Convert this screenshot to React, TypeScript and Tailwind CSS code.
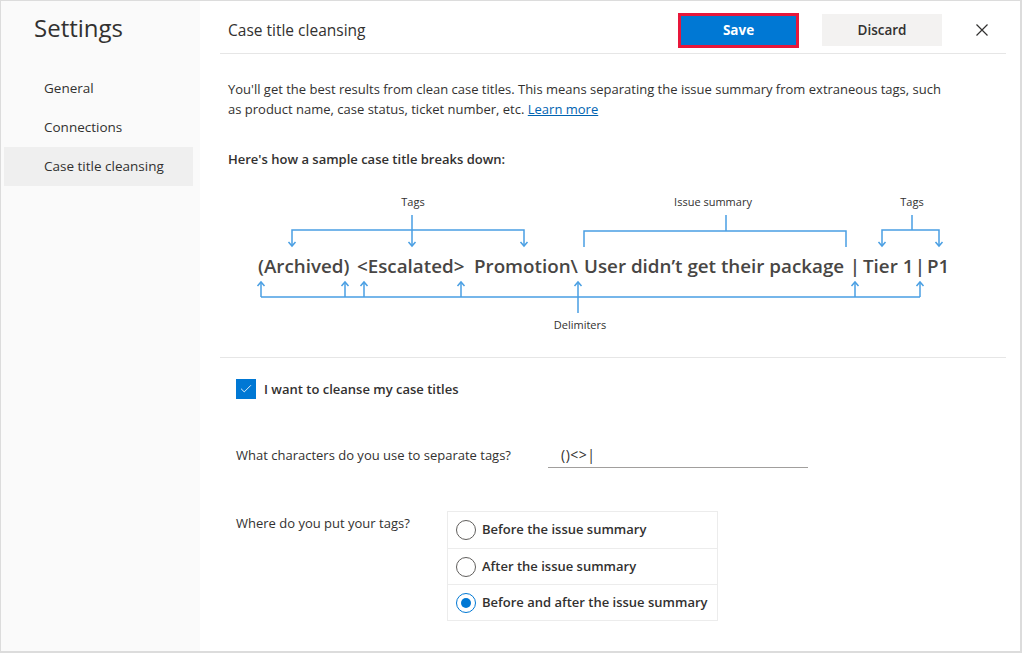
import { Check } from 'lucide-react';

const navItems = ['General', 'Connections', 'Case title cleansing'];

const tagOptions = [
  'Before the issue summary',
  'After the issue summary',
  'Before and after the issue summary',
];

// pieces of the sample title, with the width each one takes so the delimiters sit over their arrows
const sample = [
  { text: '(Archived) ', w: 'w-[99px]' },
  { text: '<Escalated> ', w: 'w-[117px]' },
  { text: 'Promotion\\ ', w: 'w-[110px]' },
  { text: 'User didn’t get their package', w: 'w-[263px]' },
  { text: '|', w: 'w-[16px] text-center' },
  { text: 'Tier 1', w: 'w-[50px]' },
  { text: '|', w: 'w-[14px] text-center' },
  { text: 'P1', w: 'w-auto' },
];

const blue = '#4a9fe3';

// arrow head helpers for the breakdown diagram
const down = (x: number, tip: number) => `M${x - 3.5} ${tip - 4} L${x} ${tip} L${x + 3.5} ${tip - 4}`;
const up = (x: number, tip: number) => `M${x - 3.5} ${tip + 4} L${x} ${tip} L${x + 3.5} ${tip + 4}`;

const Diagram = () => {
  const topTags = [72, 192, 304];
  const rightTags = [662, 719];
  const delims = [41, 125, 144, 241, 358, 635, 700];

  return (
    <div className="relative h-[160px] mt-[11px]">
      <svg className="absolute inset-0" width="786" height="160" viewBox="0 0 786 160" fill="none">
        <g stroke={blue} strokeWidth="1.5">
          {/* left tags */}
          <path d="M192 35 V50 M72 66 V50 H304 V66 M192 50 V66" />
          {topTags.map((x) => (
            <path key={x} d={down(x, 66)} />
          ))}
          {/* issue summary */}
          <path d="M506 35 V51 M364 67 V51 H626 V67" />
          {/* right tags */}
          <path d="M692 35 V50 M662 66 V50 H719 V66" />
          {rightTags.map((x) => (
            <path key={x} d={down(x, 66)} />
          ))}
          {/* delimiters */}
          <path d="M41 117 H700 M358 117 V133" />
          {delims.map((x) => (
            <g key={x}>
              <path d={`M${x} 102 V117`} />
              <path d={up(x, 102)} />
            </g>
          ))}
        </g>
        <g fill="#323130" fontSize="11" textAnchor="middle" fontFamily="'Open Sans', sans-serif">
          <text x="193" y="26">Tags</text>
          <text x="493" y="26">Issue summary</text>
          <text x="692" y="26">Tags</text>
          <text x="360" y="149">Delimiters</text>
        </g>
      </svg>
      <div className="pl-[38px] pt-[72px] flex text-[18.8px] leading-[28px] font-semibold text-[#484644] whitespace-pre">
        {sample.map((s, i) => (
          <span key={i} className={`${s.w} shrink-0`}>
            {s.text}
          </span>
        ))}
      </div>
    </div>
  );
};

export default function App() {
  return (
    <div className="w-[1022px] h-[653px] flex box-border border-t border-l border-r-2 border-b-2 border-[#dcdcdc] font-['Open_Sans',sans-serif] text-[#323130] bg-white overflow-hidden">
      <aside className="w-[199px] shrink-0 bg-[#fafafa]">
        <h1 className="pl-[33px] pt-[11px] text-[24px] leading-[32px] font-normal text-[#323130]">Settings</h1>
        <nav className="mt-[25px] pl-[3px] pr-[7px] flex flex-col">
          {navItems.map((item) => (
            <div
              key={item}
              className={`h-[39px] flex items-center pl-[40px] text-[13.5px] ${
                item === 'Case title cleansing' ? 'bg-[#efefef]' : ''
              }`}
            >
              {item}
            </div>
          ))}
        </nav>
      </aside>

      <main className="flex-1 pl-[20px] pr-[14px] flex flex-col">
        <header className="h-[53px] shrink-0 flex items-center border-b border-[#e6e6e6] pl-[8px]">
          <div className="flex-1 text-[15.5px] pt-[8px]">Case title cleansing</div>
          <button className="w-[121px] h-[35px] border-[3px] border-[#e8173a] bg-[#0078d4] text-white text-[13.5px] font-bold mt-[6px]">
            Save
          </button>
          <button className="ml-[23px] w-[120px] h-[32px] bg-[#f3f2f1] text-[13.5px] font-semibold mt-[6px]">
            Discard
          </button>
          <button className="ml-[34px] mr-[18px] mt-[6px] w-[12px] h-[12px]">
            <svg width="12" height="12" viewBox="0 0 12 12" stroke="#323130" strokeWidth="1.2">
              <path d="M0.5 0.5 L11.5 11.5 M11.5 0.5 L0.5 11.5" />
            </svg>
          </button>
        </header>

        <div className="pl-[8px]">
          <p className="mt-[25px] text-[13px] leading-[20px]">
            You'll get the best results from clean case titles. This means separating the issue summary from extraneous tags, such
            <br />
            as product name, case status, ticket number, etc.{' '}
            <a href="#" className="text-[#0063b1] underline">
              Learn more
            </a>
          </p>
          <p className="mt-[30px] text-[13px] leading-[20px] font-semibold">Here's how a sample case title breaks down:</p>
        </div>

        <Diagram />

        <div className="mt-[17px] border-t border-[#e6e6e6]" />

        <div className="pl-[16px]">
          <label className="mt-[21px] flex items-center gap-[8px]">
            <span className="w-[20px] h-[20px] bg-[#0078d4] flex items-center justify-center">
              <Check size={14} color="white" strokeWidth={1.5} />
            </span>
            <span className="text-[13px] leading-[20px] font-semibold">I want to cleanse my case titles</span>
          </label>

          <div className="mt-[45px] flex items-start">
            <div className="w-[312px] text-[13px] leading-[20px] pt-[1px]">What characters do you use to separate tags?</div>
            <div className="w-[260px] h-[24px] border-b border-[#a19f9d] pl-[13px] text-[14px] leading-[20px] pt-[1px] tracking-[0.5px]">
              ()&lt;&gt;|
            </div>
          </div>

          <div className="mt-[43px] flex items-start">
            <div className="w-[211px] text-[13px] leading-[20px] pt-[2px]">Where do you put your tags?</div>
            <div className="w-[271px] border border-[#ececec] flex flex-col">
              {tagOptions.map((opt, i) => (
                <div
                  key={opt}
                  className={`h-[36px] flex items-center pl-[8px] gap-[6px] ${i > 0 ? 'border-t border-[#ececec]' : ''}`}
                >
                  {i === 2 ? (
                    <span className="w-[20px] h-[20px] rounded-full border border-[#0078d4] flex items-center justify-center">
                      <span className="w-[10px] h-[10px] rounded-full bg-[#0078d4]" />
                    </span>
                  ) : (
                    <span className="w-[20px] h-[20px] rounded-full border border-[#605e5c]" />
                  )}
                  <span className="text-[13px] font-semibold">{opt}</span>
                </div>
              ))}
            </div>
          </div>
        </div>
      </main>
    </div>
  );
}
